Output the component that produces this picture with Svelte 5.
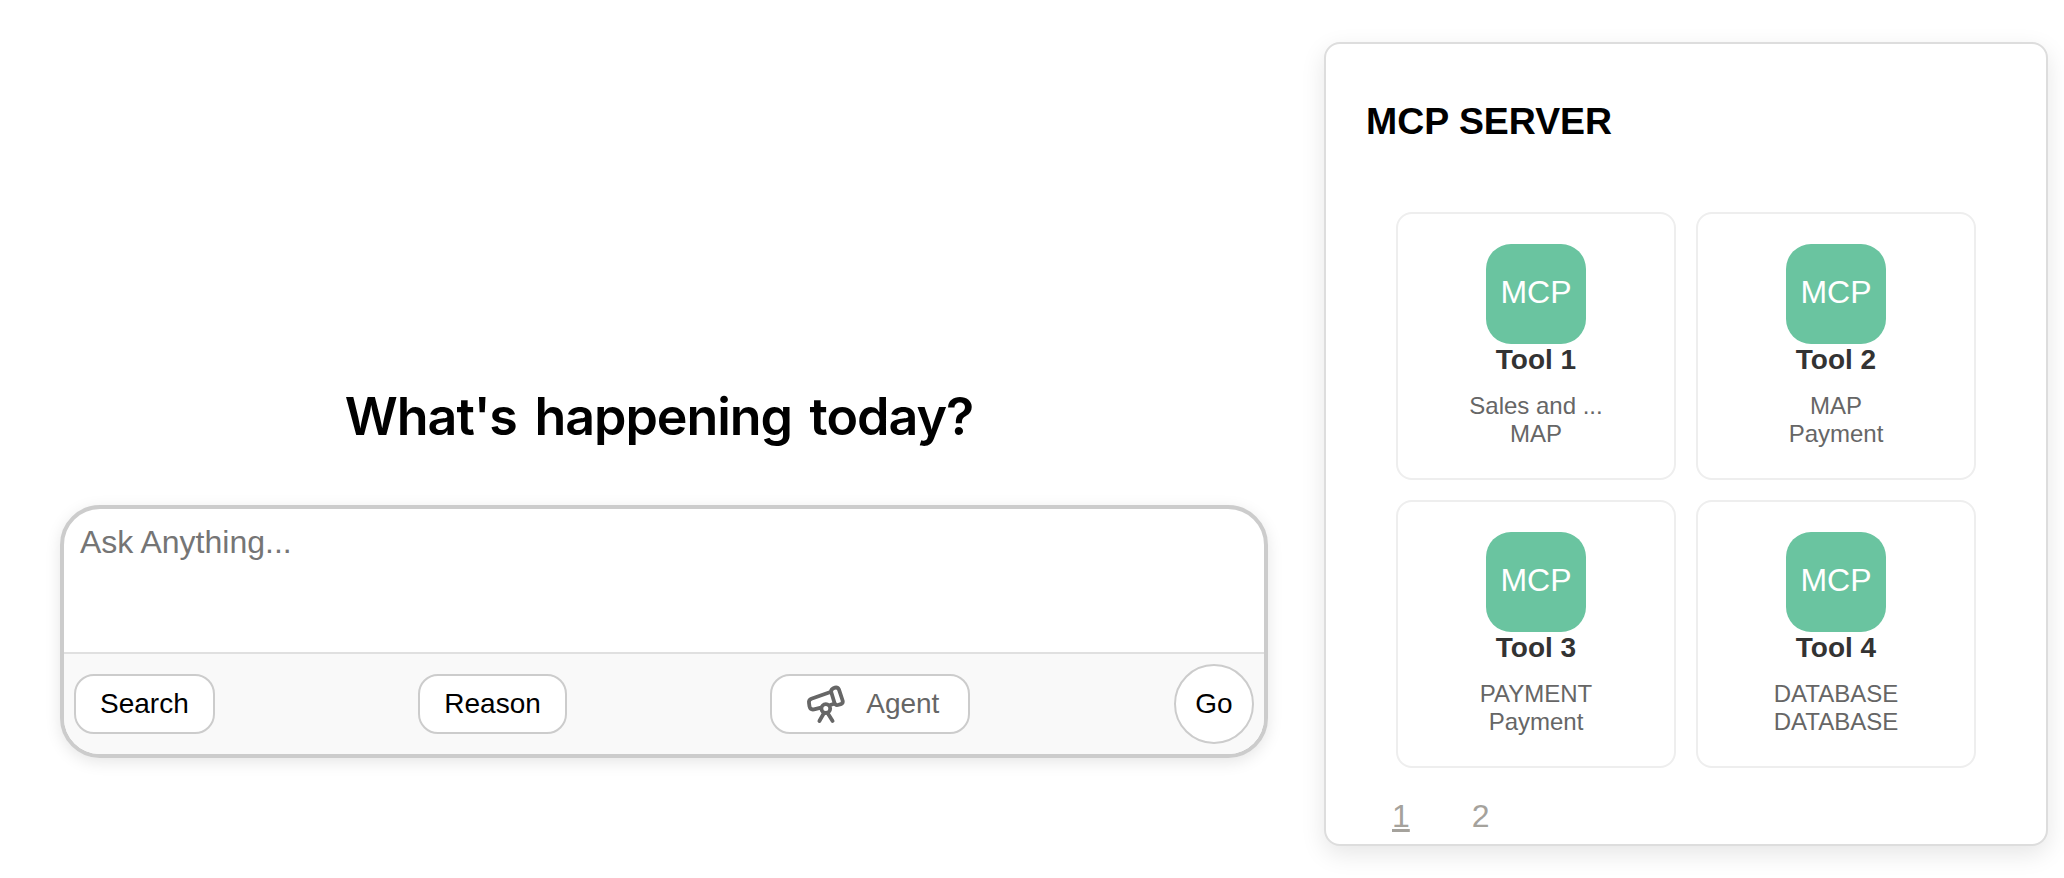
<script>
  const tools = [
    { name: 'Tool 1', lines: ['Sales and ...', 'MAP'] },
    { name: 'Tool 2', lines: ['MAP', 'Payment'] },
    { name: 'Tool 3', lines: ['PAYMENT', 'Payment'] },
    { name: 'Tool 4', lines: ['DATABASE', 'DATABASE'] }
  ];
  const pages = [1, 2];
  let current = $state(1);
</script>

<main class="page">
  <section class="ask">
    <h1>What's happening today?</h1>
    <div class="composer">
      <textarea placeholder="Ask Anything..."></textarea>
      <div class="actions">
        <button class="pill">Search</button>
        <button class="pill">Reason</button>
        <button class="pill agent">
          <svg viewBox="0 0 40 40" width="40" height="40" fill="none" stroke="#666" stroke-width="3.8" stroke-linecap="round" stroke-linejoin="round">
            <path d="M25.2 7.8 5.4 14.8Q2.5 16 3 19L3.5 22.4Q4.3 26 8 25.4L15 23.6" />
            <path d="M25.2 8Q24.8 5.4 27.4 4.2 31.4 2.4 33 5.6L36.6 16.5Q37.3 19.4 34.8 20.2L31.8 21Q29.4 21.4 28.6 19.2Z" />
            <path d="M28.2 19.7 24.2 21" />
            <circle cx="19.8" cy="24.6" r="4.4" />
            <path d="M17.4 30 13.4 37M22.2 30 26.6 37" />
          </svg>
          <span>Agent</span>
        </button>
        <button class="go">Go</button>
      </div>
    </div>
  </section>

  <aside class="panel">
    <h3>MCP SERVER</h3>
    <div class="grid">
      {#each tools as tool}
        <article class="card">
          <div class="logo">MCP</div>
          <div class="name">{tool.name}</div>
          <div class="desc">
            {#each tool.lines as line}<div>{line}</div>{/each}
          </div>
        </article>
      {/each}
    </div>
    <nav class="pager">
      {#each pages as p}
        <button class:active={p === current} onclick={() => (current = p)}>{p}</button>
      {/each}
    </nav>
  </aside>
</main>

<style>
  :global(body) { margin: 0; background: #fff; }
  .page, .page * { box-sizing: border-box; }
  .page {
    width: 2064px;
    height: 878px;
    padding: 42px 16px 32px 60px;
    display: flex;
    justify-content: space-between;
    overflow: hidden;
    font-family: 'Liberation Sans', Arial, sans-serif;
  }
  button { font-family: inherit; cursor: pointer; }
  .ask {
    width: 1208px;
    display: flex;
    flex-direction: column;
    padding-top: 335px;
  }
  h1 {
    margin: 0 0 48px;
    padding-right: 10px;
    text-align: center;
    font: 600 52px/80px Inter, sans-serif;
    letter-spacing: -1.05px;
    word-spacing: 5.5px;
    color: #000;
    white-space: nowrap;
  }
  .composer {
    height: 253px;
    border: 4px solid #ccc;
    border-radius: 40px;
    overflow: hidden;
    background: #fff;
    box-shadow: 0 4px 16px rgba(0, 0, 0, 0.1);
    display: flex;
    flex-direction: column;
  }
  textarea {
    flex: 1;
    border: 0;
    outline: 0;
    resize: none;
    padding: 15px 16px;
    background: transparent;
    font: 32px/37px 'Liberation Sans', Arial, sans-serif;
  }
  textarea::placeholder { color: #757575; }
  .actions {
    height: 102px;
    padding: 0 10px;
    border-top: 2px solid #e0e0e0;
    background: #f9f9f9;
    display: flex;
    align-items: center;
    justify-content: space-between;
  }
  .pill, .go {
    border: 2px solid #ccc;
    background: #fff;
    font-size: 28px;
    color: #000;
  }
  .pill { height: 60px; padding: 0 24px; border-radius: 20px; }
  .agent {
    width: 200px;
    padding: 0 29px 0 34px;
    display: flex;
    align-items: center;
    justify-content: space-between;
    color: #666;
  }
  .go { width: 80px; height: 80px; padding: 0; border-radius: 50%; }
  .panel {
    width: 724px;
    height: 804px;
    padding: 0 40px;
    border: 2px solid #ddd;
    border-radius: 16px;
    background: #fff;
    box-shadow: 0 8px 24px rgba(0, 0, 0, 0.1);
  }
  h3 { margin: 55px 0 0; font-size: 37.44px; line-height: 44px; color: #000; }
  .grid {
    display: grid;
    grid-template-columns: repeat(2, 280px);
    grid-auto-rows: 268px;
    gap: 20px;
    padding: 69px 0 0 30px;
  }
  .card {
    border: 2px solid #eee;
    border-radius: 16px;
    padding-top: 30px;
    display: flex;
    flex-direction: column;
    align-items: center;
    text-align: center;
  }
  .logo {
    width: 100px;
    height: 100px;
    border-radius: 25px;
    background: #6ac4a0;
    color: #fff;
    font-size: 32px;
    line-height: 96px;
  }
  .name { font-size: 28px; line-height: 32px; font-weight: 700; color: #333; }
  .desc { margin-top: 16px; font-size: 24px; line-height: 28px; color: #666; }
  .pager { display: flex; gap: 62px; padding: 30px 0 0 26px; }
  .pager button {
    border: 0;
    padding: 0;
    background: none;
    font-size: 32px;
    line-height: 36px;
    color: #a5a29c;
  }
  .pager .active { text-decoration: underline; text-decoration-thickness: 3px; text-underline-offset: 2px; }
</style>
